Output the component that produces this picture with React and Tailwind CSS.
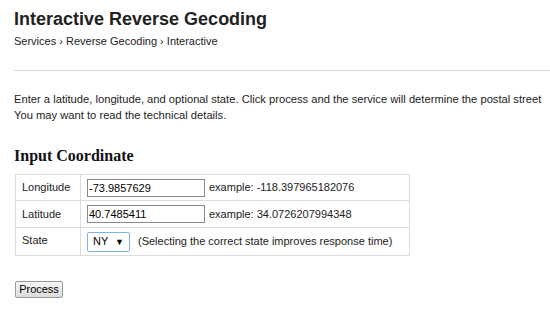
import { useState } from 'react';

const rows = [
  { label: 'Longitude', value: '-73.9857629', example: 'example: -118.397965182076', h: 'h-[26px]' },
  { label: 'Latitude', value: '40.7485411', example: 'example: 34.0726207994348', h: 'h-[27px]' },
];

export default function App() {
  const [coords, setCoords] = useState({ Longitude: rows[0].value, Latitude: rows[1].value });
  const [state, setState] = useState('NY');

  return (
    <div className="w-[550px] h-[313px] overflow-hidden bg-white text-[#222] font-['Tahoma','Liberation_Sans',sans-serif] text-[11px]">
      <div className="pl-[14px]">
        <h1 className="pt-[7px] text-[18px] leading-[24px] font-bold text-[#222]">Interactive Reverse Gecoding</h1>
        <div className="mt-[3px] text-[11px] leading-[14px] text-[#222]">
          Services &rsaquo; Reverse Gecoding &rsaquo; Interactive
        </div>

        <hr className="mt-[22px] border-0 border-t border-[#d4d4d4]" />

        <p className="mt-[20px] whitespace-nowrap text-[11.2px] leading-[16px]">
          Enter a latitude, longitude, and optional state. Click process and the service will determine the postal street
          <br />
          You may want to read the technical details.
        </p>

        <h2 className="mt-[23px] text-[16px] leading-[20px] font-bold text-[#111] font-['Liberation_Serif',serif]">Input Coordinate</h2>

        <table className="mt-[8px] ml-px w-[395px] border-collapse border border-[#dcdcdc]">
          <tbody>
            {rows.map((r) => (
              <tr key={r.label} className={r.h}>
                <td className="w-[65px] border border-[#dcdcdc] px-[6px]">{r.label}</td>
                <td className="border border-[#dcdcdc] px-[6px]">
                  <div className="flex items-center gap-[4px]">
                    <input
                      value={coords[r.label]}
                      onChange={(e) => setCoords({ ...coords, [r.label]: e.target.value })}
                      className="w-[118px] h-[18px] border border-[#8a8a8a] px-[1px] text-[11px] text-black outline-none"
                    />
                    <span>{r.example}</span>
                  </div>
                </td>
              </tr>
            ))}
            <tr className="h-[28px]">
              <td className="border border-[#dcdcdc] px-[6px] pb-[3px]">State</td>
              <td className="border border-[#dcdcdc] px-[6px]">
                <div className="flex items-center gap-[8px]">
                  <div className="relative w-[43px] h-[20px] border border-[#7eb4ea] rounded-[2px] bg-white flex items-center">
                    <select
                      value={state}
                      onChange={(e) => setState(e.target.value)}
                      className="appearance-none w-full h-full pl-[5px] text-[11px] text-black bg-transparent outline-none"
                    >
                      <option>NY</option>
                      <option>CA</option>
                      <option>NJ</option>
                    </select>
                    <span className="pointer-events-none absolute right-[5px] top-[3px] text-[9px] text-black">&#9660;</span>
                  </div>
                  <span>(Selecting the correct state improves response time)</span>
                </div>
              </td>
            </tr>
          </tbody>
        </table>

        <button className="mt-[25px] ml-px w-[48px] h-[17px] border border-[#9a9a9a] rounded-[2px] bg-gradient-to-b from-[#f6f6f6] to-[#dcdcdc] text-[11px] leading-none text-black">
          Process
        </button>
      </div>
    </div>
  );
}
